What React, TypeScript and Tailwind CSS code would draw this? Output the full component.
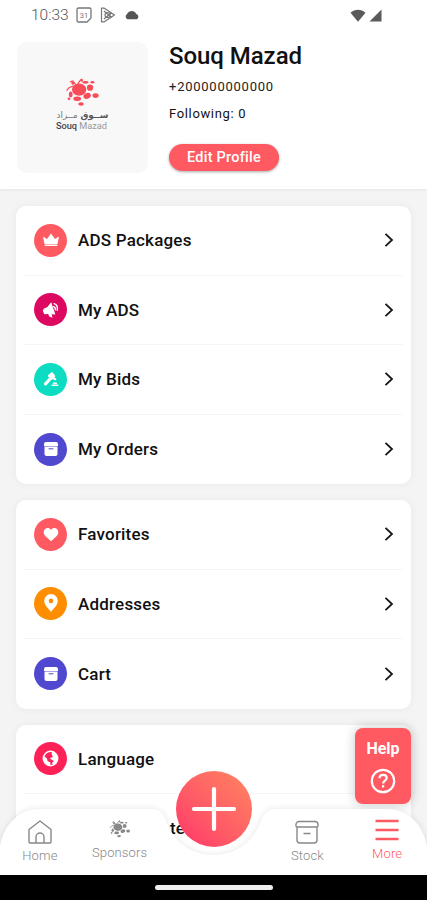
import type { ReactNode } from "react"

function CrownIcon() {
  return (
    <svg width="18" height="16" viewBox="0 0 18 16" fill="white">
      <path d="M1 4.600 5 7 9 1.600l4 5.400 4-2.400-1.500 7.400h-13z" />
      <rect x="2.600" y="12.500" width="12.800" height="1.500" rx=".5" />
    </svg>
  )
}

function MegaphoneIcon() {
  return (
    <svg width="18" height="18" viewBox="0 0 18 18" fill="white">
      <path d="M.8 9.800 2 7.400 5.400 6 9.200 1.200 13.400 13.600 9.600 13.200l.9 3.600-3.200-1.200-1.200-2.600-3.800.3z" />
      <path d="M12 2.600c2.700.8 3.900 3.300 3.200 6.600M11.600 5.600c1.400.5 2 1.700 1.700 3.200" fill="none" stroke="white" strokeWidth="1.400" strokeLinecap="round" />
    </svg>
  )
}

function GavelIcon() {
  return (
    <svg width="18" height="18" viewBox="0 0 18 18" fill="none" stroke="white" strokeLinecap="round">
      <path d="M6.800 5.800 10 3.200 12.200 6 9.600 8.800z" fill="white" strokeWidth="2" strokeLinejoin="round" />
      <path d="M10.500 7.500 13.200 9.200" strokeWidth="2.200" />
      <path d="M8.500 8.500 3.500 13.800" strokeWidth="3.200" />
      <path d="M11.500 13.200h2.800M10.300 15.300h5.400" strokeWidth="1.600" />
    </svg>
  )
}

function BoxIcon() {
  return (
    <svg width="16" height="16" viewBox="0 0 16 16" fill="white">
      <path d="M3 1h10a2 2 0 0 1 2 2v1.900H1V3a2 2 0 0 1 2-2z" />
      <path d="M1.500 5.500h13V13a2 2 0 0 1-2 2h-9a2 2 0 0 1-2-2z" />
      <path d="M6 7.800h4" stroke="#5048ce" strokeWidth="1" strokeLinecap="round" />
    </svg>
  )
}

function HeartIcon() {
  return (
    <svg width="16" height="15" viewBox="0 0 16 15" fill="white">
      <path d="M8 14.300 2 8.700C.2 6.800.3 3.700 2 2.100 3.800.4 6.500.8 8 2.800 9.500.8 12.200.4 14 2.100c1.700 1.600 1.800 4.700 0 6.600z" />
    </svg>
  )
}

function PinIcon() {
  return (
    <svg width="16" height="20" viewBox="0 0 16 20" fill="white" fillRule="evenodd" className="-translate-y-px">
      <path d="M8 1a6.800 6.800 0 0 1 6.800 6.800C14.800 12.500 9.500 16.500 8 19 6.500 16.500 1.200 12.500 1.200 7.800A6.800 6.800 0 0 1 8 1zm0 4.600a2.300 2.300 0 1 0 0 4.600 2.300 2.300 0 0 0 0-4.600z" />
    </svg>
  )
}

function GlobeIcon() {
  return (
    <svg width="17" height="17" viewBox="0 0 17 17">
      <circle cx="8.500" cy="8.500" r="7.200" fill="#fd2157" stroke="white" strokeWidth="1.500" />
      <path d="M10.500 1.500c3.200.6 5.500 3.500 5.200 7.200-.2 3-2.200 5.400-4.700 6.300l-1-2 1.800-2L7.800 8.500l3-1.800L9.500 4z" fill="white" />
      <path d="M1.800 6 5 8.500l.5 2.500 3 1.500-.3 3.200C4.300 15.500 1.300 12.500 1.500 8z" fill="white" />
    </svg>
  )
}

function SplashMark({ className }: { className?: string }) {
  return (
    <svg viewBox="0 0 36 30" className={className} fill="currentColor">
      <ellipse cx="14.500" cy="12" rx="7.400" ry="6.300" />
      <path d="M9 8 4 10 1.500 13M11 7 8 3 5 4M13 6l3-4" stroke="currentColor" strokeWidth="1.300" fill="none" />
      <circle cx="8" cy="5.300" r="1.600" />
      <circle cx="17" cy="2.300" r="1.500" />
      <ellipse cx="5.800" cy="17" rx="1.900" ry="3" />
      <circle cx="4" cy="21.500" r="1.400" />
      <ellipse cx="12.500" cy="21.500" rx="4" ry="2.300" />
      <ellipse cx="16.500" cy="27" rx="2.900" ry="1.800" />
      <ellipse cx="22.800" cy="18.500" rx="4" ry="2.800" transform="rotate(-22 22.800 18.500)" />
      <ellipse cx="31.500" cy="18.200" rx="3.200" ry="2.500" />
      <circle cx="25.800" cy="10" r="3.200" />
      <ellipse cx="21" cy="4.500" rx="3.200" ry="1.500" />
      <ellipse cx="28.300" cy="4.500" rx="2" ry="1.300" />
    </svg>
  )
}

function StatusBar() {
  return (
    <div className="flex h-[30px] items-center pr-[45px] pl-[31px] text-[#777]">
      <span className="w-[39px] pt-px text-[15.500px] font-light text-[#555]">10:33</span>
      <svg width="16" height="16" viewBox="0 0 16 16" className="ml-[6px]" fill="none" stroke="currentColor" strokeWidth="1.300">
        <path d="M2.500 1h11a1.500 1.500 0 0 1 1.500 1.500V11l-4 4H2.500A1.500 1.500 0 0 1 1 13.500v-11A1.500 1.500 0 0 1 2.500 1z" />
        <text x="3.800" y="11" fontSize="7.500" fill="currentColor" stroke="none" fontFamily="Roboto">31</text>
      </svg>
      <svg width="16" height="16" viewBox="0 0 16 16" className="ml-[8px]" fill="none" stroke="currentColor" strokeWidth="1.200" strokeLinejoin="round">
        <path d="M1.500 1.200h2.800L14.500 8 4.300 14.800H1.500zM4 4l7.500 6.500M4 12l7.500-6.500" />
        <circle cx="7.500" cy="8" r="2.500" />
      </svg>
      <svg width="16" height="10" viewBox="0 0 16 10" className="ml-[8px]" fill="#555">
        <path d="M3.500 9.200A3 3 0 0 1 3 3.900 5.200 5.200 0 0 1 12.300 4a2.800 2.800 0 0 1 .5 5.200z" />
      </svg>
      <svg width="16" height="13" viewBox="0 0 16 13" className="ml-auto" fill="#5a5a5a">
        <path d="M8 12.700.5 3.700C4.700-.3 11.300-.3 15.500 3.700z" />
      </svg>
      <svg width="13" height="13" viewBox="0 0 13 13" className="ml-[3px]" fill="#5a5a5a">
        <path d="M12.500.5v12H.5z" />
      </svg>
    </div>
  )
}

function Header() {
  return (
    <header className="h-[189px] shrink-0 bg-white shadow-[0_0_4px_rgba(0,0,0,0.1)]">
      <StatusBar />
      <div className="flex pt-3 pl-[17px]">
        <div className="flex h-[131px] w-[131px] flex-col items-center rounded-[10px] bg-[#f8f8f8] pt-[36px]">
          <SplashMark className="h-[29px] w-[35px] text-[#f84d58]" />
          <div dir="rtl" className="mt-[2px] h-[12px] text-[8.800px] leading-[12px] whitespace-nowrap text-[#777]" style={{ fontFamily: '"DejaVu Sans", sans-serif' }}>
            <span className="font-bold text-[#555]">ســوق</span> مــزاد
          </div>
          <div className="-ml-[2px] text-[9.200px] leading-[10px] whitespace-nowrap text-[#999]">
            <span className="font-medium text-[#444]">Souq</span> Mazad
          </div>
        </div>
        <div className="ml-[21px] flex flex-col items-start">
          <h1 className="text-[24px] leading-[28px] font-medium tracking-[-0.050px] text-[#111]">Souq Mazad</h1>
          <p className="mt-[9px] text-[13px] leading-[16px] tracking-[0.750px] text-[#222]">+200000000000</p>
          <p className="mt-[11px] text-[13px] leading-[16px] tracking-[0.650px] text-[#111]">Following: 0</p>
          <button className="mt-[22px] h-[27px] w-[110px] rounded-full bg-[#ff5a62] text-[14.500px] font-medium tracking-[0.250px] text-white shadow-[0_1px_3px_rgba(0,0,0,0.35)]">
            Edit Profile
          </button>
        </div>
      </div>
    </header>
  )
}

function Chevron() {
  return (
    <svg width="10" height="16" viewBox="0 0 10 16" fill="none" stroke="#161616" strokeWidth="1.800">
      <path d="m1.500 1.800 6.500 6.200-6.500 6.200" />
    </svg>
  )
}

type Item = { label: string; color: string; icon: ReactNode }

const groups: Item[][] = [
  [
    { label: "ADS Packages", color: "bg-[#ff5a62]", icon: <CrownIcon /> },
    { label: "My ADS", color: "bg-[#dd0860]", icon: <MegaphoneIcon /> },
    { label: "My Bids", color: "bg-[#0bdcc2]", icon: <GavelIcon /> },
    { label: "My Orders", color: "bg-[#5048ce]", icon: <BoxIcon /> },
  ],
  [
    { label: "Favorites", color: "bg-[#ff5a62]", icon: <HeartIcon /> },
    { label: "Addresses", color: "bg-[#ff8d00]", icon: <PinIcon /> },
    { label: "Cart", color: "bg-[#5048ce]", icon: <BoxIcon /> },
  ],
  [{ label: "Language", color: "bg-[#fd2157]", icon: <GlobeIcon /> }],
]

function MenuRow({ item }: { item: Item }) {
  return (
    <div className="flex h-[69.500px] items-center pr-[9px] pl-[10px]">
      <span className={`flex h-[33px] w-[33px] items-center justify-center rounded-full ${item.color}`}>{item.icon}</span>
      <span className="ml-[11px] pt-px text-[17px] font-medium tracking-[0.200px] text-[#111]">{item.label}</span>
      <span className="ml-auto">
        <Chevron />
      </span>
    </div>
  )
}

function MenuGroup({ items, children }: { items: Item[]; children?: ReactNode }) {
  return (
    <section className="divide-y divide-[#f5f5f5] rounded-[10px] bg-white px-2 shadow-[0_0_8px_rgba(0,0,0,0.05)]">
      {items.map((item) => (
        <MenuRow key={item.label} item={item} />
      ))}
      {children}
    </section>
  )
}

function NavItem({ label, className = "", children }: { label: string; className?: string; children: ReactNode }) {
  return (
    <div className={`flex w-[80px] flex-col items-center ${className}`}>
      <div className="flex h-[25px] items-center">{children}</div>
      <span className="mt-[4px] text-[13px] leading-[15px] font-light tracking-[0.150px]">{label}</span>
    </div>
  )
}

function BottomNav() {
  return (
    <nav className="absolute inset-x-0 bottom-0 h-[92px]">
      <svg width="427" height="68" viewBox="0 0 427 68" className="absolute top-0 left-0 overflow-visible" style={{ filter: "drop-shadow(0 0 3px rgba(0,0,0,0.1))" }}>
        <path d="M0 68V39C3 18 18 1 40 1H150C160 1 163 5 166 13C174 35 192 47 213.500 47S253 35 261 13C264 5 267 1 277 1H387C409 1 424 18 427 39V68z" fill="white" />
      </svg>
      <div className="relative flex h-[67px] text-[#888]">
        <NavItem label="Home" className="pt-[11px]">
          <svg width="24" height="24" viewBox="0 0 24 24" fill="none" stroke="currentColor" strokeWidth="1.400" strokeLinejoin="round">
            <path d="M1 9.500 12 1l11 8.500V22a1 1 0 0 1-1 1H2a1 1 0 0 1-1-1zM8 23v-6a4 4 0 0 1 8 0v6" />
          </svg>
        </NavItem>
        <NavItem label="Sponsors" className="pt-[8px]">
          <SplashMark className="h-[18px] w-[22px]" />
        </NavItem>
        <NavItem label="Stock" className="ml-[108px] pt-[11px]">
          <svg width="24" height="24" viewBox="0 0 24 24" fill="none" stroke="currentColor" strokeWidth="1.400">
            <path d="M4 1.500h16a3 3 0 0 1 3 3V6a1 1 0 0 1-1 1H2a1 1 0 0 1-1-1V4.500a3 3 0 0 1 3-3zM2 7v13a3 3 0 0 0 3 3h14a3 3 0 0 0 3-3V7M8.500 13.500h7" />
          </svg>
        </NavItem>
        <NavItem label="More" className="pt-[9px] text-[#ff5a62]">
          <svg width="24" height="24" viewBox="0 0 24 24" stroke="currentColor" strokeWidth="2.300">
            <path d="M.5 3h23M.5 12h23M.5 21h23" />
          </svg>
        </NavItem>
      </div>
      <div className="relative flex h-[25px] items-center justify-center bg-black">
        <div className="h-[5px] w-[118px] rounded-full bg-[#eee]" />
      </div>
      <button className="absolute top-[-37px] left-[175.500px] flex h-[76px] w-[76px] items-center justify-center rounded-full bg-linear-to-tr from-[#ff2f69] to-[#ff8460]">
        <svg width="46" height="46" viewBox="0 0 46 46" stroke="white" strokeWidth="4.200" strokeLinecap="round">
          <path d="M23 3v40M3 23h40" />
        </svg>
      </button>
    </nav>
  )
}

function HelpButton() {
  return (
    <button className="absolute top-[728px] left-[355px] flex h-[76px] w-[56px] flex-col items-center rounded-[8px] bg-[#ff5a62] pt-[11px] text-white shadow-[0_0_12px_rgba(0,0,0,0.22)]">
      <span className="text-[16px] leading-[20px] font-bold">Help</span>
      <svg width="26" height="26" viewBox="0 0 26 26" className="mt-[9px]" fill="none" stroke="white" strokeWidth="2.200">
        <circle cx="13" cy="13" r="11.200" />
        <path d="M9.500 10.200c0-4.500 7.200-4.300 7.200-.2 0 2.600-3.600 2.700-3.600 5.400" />
        <path d="M13.100 17.200v2.300" />
      </svg>
    </button>
  )
}

export default function App() {
  return (
    <div className="relative flex h-[900px] w-[427px] flex-col overflow-hidden bg-[#f4f4f4]" style={{ fontFamily: "Roboto, sans-serif" }}>
      <Header />
      <main className="flex flex-col gap-4 px-4 pt-[17px]">
        <MenuGroup items={groups[0]} />
        <MenuGroup items={groups[1]} />
        <MenuGroup items={groups[2]}>
          <div className="flex h-[90px] items-start pt-[22px] pl-[146px] text-[17px] font-medium text-[#111]">te</div>
        </MenuGroup>
      </main>
      <HelpButton />
      <BottomNav />
    </div>
  )
}
